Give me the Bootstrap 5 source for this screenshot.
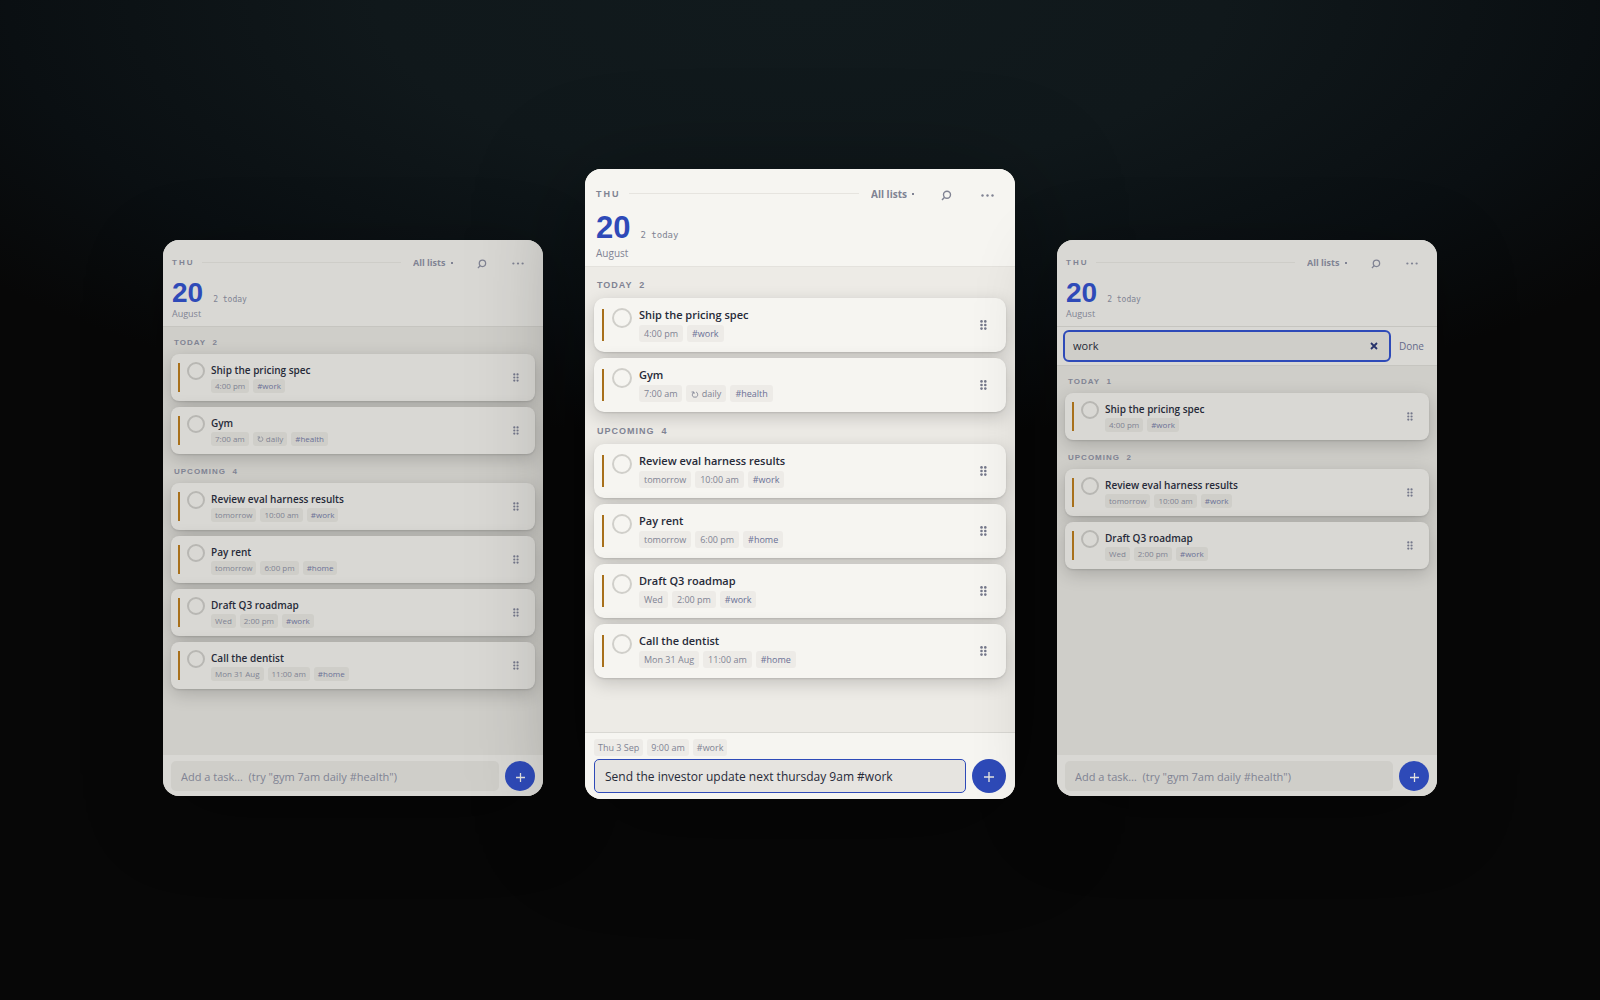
<!DOCTYPE html>
<html lang="en">
<head>
<meta charset="utf-8">
<meta name="viewport" content="width=device-width, initial-scale=1">
<title>Tasks</title>
<link href="https://cdn.jsdelivr.net/npm/bootstrap@5.3.0/dist/css/bootstrap.min.css" rel="stylesheet">
<style>
  body {
    min-height: 100vh;
    font-family: "Open Sans", "Noto Sans", sans-serif;
    background: radial-gradient(ellipse 66% 440px at 50% 0, #111a1d 0%, #10181b 40%, #0a0f12 75%, #070707 100%) no-repeat #070707;
  }
  .stage { padding: 169px 16px 80px; gap: 42px; }

  /* One task window; the sizes of the two smaller windows are the defaults */
  .panel {
    --paper: #d9d8d4; --desk: #cfcec9; --chip: #cfcec9; --rule: #c6c5c0; --ring: #b8b7b3;
    --ink: #262a38; --soft: #808393; --blue: #2e4ab8;
    --fs-title: 10px; --fs-chip: 8px; --fs-label: 8px; --fs-day: 28px; --fs-entry: 11px; --fs-menu: 9px;
    --pad: 8px; --chip-h: 14px; --check: 18px; --bar-h: 29px; --btn: 30px;
    flex: 0 1 380px; min-width: 0; min-height: 556px; margin-bottom: 3px;
    border-radius: 16px; overflow: hidden;
    background: var(--desk); color: var(--ink);
    box-shadow: 0 20px 80px rgba(0,0,0,.3);
  }
  .panel-main {
    --paper: #f6f5f1; --desk: #edebe6; --chip: #edebe7; --rule: #d9d8d3; --ring: #d0cfca;
    --fs-title: 11px; --fs-chip: 9px; --fs-label: 9px; --fs-day: 31px; --fs-entry: 12px; --fs-menu: 10px;
    --pad: 9px; --chip-h: 17px; --check: 20px; --bar-h: 32px; --btn: 34px;
    flex-basis: 430px; min-height: 630px; margin-bottom: 0;
    box-shadow: 0 20px 110px rgba(0,0,0,.4);
  }

  .panel-head { background: var(--paper); border-bottom: 1px solid var(--rule); height: 87px; padding: 12px 9px 0; }
  .panel-main .panel-head { height: 98px; padding: 14px 11px 0; border-color: #e4e2dd; }
  .head-row { height: 21px; }
  .weekday { font: bold var(--fs-label)/12px "Liberation Sans", sans-serif; letter-spacing: 2px; color: var(--soft); }
  .head-rule { height: 1px; background: #cecdc8; margin: 0 12px 0 8px; }
  .panel-main .head-rule { background: #e6e4df; }
  .list-pick { appearance: none; border: 0; padding: 0; background: none; font-weight: 700; font-size: var(--fs-menu); line-height: 14px; color: var(--soft); }
  .pick-dot { width: 2px; height: 2px; background: var(--soft); margin-left: 5px; }
  .icon-btn { border: 0; padding: 0; background: none; color: var(--soft); line-height: 0; width: 36px; height: 20px; }
  .head-tools { margin: 2px -2px 0 11px; }
  .panel-main .icon-btn { width: 41px; }
  .panel-main .head-tools { margin: 3px -4px 0 12px; }
  .day-row { height: 34px; gap: 10px; padding-top: 6px; }
  .panel-main .day-row { height: 42px; padding-top: 8px; }
  .day { font: bold var(--fs-day)/1 "Liberation Sans", sans-serif; color: var(--blue); }
  .count { font: var(--fs-label)/1 "DejaVu Sans Mono", monospace; color: var(--soft); }
  .month { font-size: var(--fs-menu); line-height: 14px; color: var(--soft); }

  .find-row { background: var(--paper); border-bottom: 1px solid var(--rule); padding: 3px 13px 3px 6px; gap: 8px; }
  .find-box { border: 2px solid var(--blue); border-radius: 6px; background: var(--desk); height: 32px; padding: 0 11px 0 8px; }
  .find-box input { border: 0; background: none; outline: 0; padding: 0; min-width: 0; font-size: var(--fs-entry); color: var(--ink); }
  .done-btn { border: 0; padding: 0; background: none; font-size: 10px; color: #666b8a; }

  .panel-body { padding: 9px var(--pad) 24px; }
  .group-label { font: bold var(--fs-label)/14px "Liberation Sans", sans-serif; letter-spacing: 1px; white-space: pre; color: var(--soft); margin: 0 0 4px 3px; }
  .task + .group-label { margin-top: 11px; }
  .panel-main .group-label { line-height: 16px; margin: 0 0 5px 3px; }
  .panel-main .panel-body { padding-top: 10px; }
  .panel-main .task + .group-label { margin-top: 11px; }
  .task { height: 47px; padding: 0 16px 1px 7px; background: var(--paper); border-radius: 8px; box-shadow: 0 1px 2px rgba(0,0,0,.12), 0 5px 18px rgba(0,0,0,.18); }
  .task + .task { margin-top: 6px; }
  .panel-main .task { height: 54px; padding: 0 19px 1px 8px; border-radius: 10px; }
  .task-bar { width: 2px; height: var(--bar-h); background: #a8701b; }
  .task-check { appearance: none; width: var(--check); height: var(--check); border: 2px solid var(--ring); border-radius: 50%; margin: 8px 6px 0 7px; align-self: flex-start; flex: none; }
  .panel-main .task-check { margin: 10px 7px 0 8px; }
  .task-title { font-size: var(--fs-title); line-height: 16px; font-weight: 600; margin-bottom: 1px; }
  .panel-main .task-title { margin-bottom: 2px; }
  .tags { gap: 4px; }
  .tag { height: var(--chip-h); line-height: var(--chip-h); padding: 0 4px; border-radius: 3px; background: var(--chip); font-size: var(--fs-chip); color: var(--soft); white-space: nowrap; }
  .panel-main .tag { padding: 0 5px; }
  .panel-main .panel-foot .tag { padding: 0 4px; }
  .tag-key { color: #6a7096; }
  .grip { color: #74778a; line-height: 0; }

  .panel-foot { background: var(--paper); border-top: 1px solid var(--rule); padding: 5px var(--pad); }
  .panel:not(.panel-main) .panel-foot { border-top-color: var(--paper); }
  .panel-main .panel-foot { padding: 6px 9px; }
  .panel-main .panel-foot > .tags { margin-bottom: 3px; }
  .entry-row { gap: 6px; }
  .entry { height: var(--btn); border: 1px solid transparent; border-radius: 5px; background: var(--desk); font-size: var(--fs-entry); padding: 0 9px; color: var(--ink); min-width: 0; outline: 0; }
  .entry::placeholder { color: var(--soft); opacity: 1; }
  .panel-main .entry { background: #e6e4e0; border-color: var(--blue); padding: 0 10px; }
  .add-btn { width: var(--btn); height: var(--btn); border: 0; border-radius: 50%; background: var(--blue); color: #e4e3df; padding: 2px 0 0; line-height: 0; flex: none; }
</style>
</head>
<body>
<svg width="0" height="0" class="position-absolute" aria-hidden="true">
  <symbol id="find" viewBox="0 0 11 11"><circle cx="6" cy="4.8" r="3.5" fill="none" stroke="currentColor" stroke-width="1.4"/><path d="M3.6 7.2L1 10" stroke="currentColor" stroke-width="1.4"/></symbol>
  <symbol id="dots" viewBox="0 0 13 3"><g fill="currentColor"><circle cx="1.5" cy="1.5" r="1.2"/><circle cx="6.5" cy="1.5" r="1.2"/><circle cx="11.5" cy="1.5" r="1.2"/></g></symbol>
  <symbol id="grip" viewBox="0 0 7 10"><g fill="currentColor"><circle cx="1.5" cy="1.4" r="1.3"/><circle cx="5.3" cy="1.4" r="1.3"/><circle cx="1.5" cy="5" r="1.3"/><circle cx="5.3" cy="5" r="1.3"/><circle cx="1.5" cy="8.6" r="1.3"/><circle cx="5.3" cy="8.6" r="1.3"/></g></symbol>
  <symbol id="plus" viewBox="0 0 10 10"><path d="M5 0v10M0 5h10" stroke="currentColor" stroke-width="1.4"/></symbol>
  <symbol id="loop" viewBox="0 0 8 7"><path d="M.6 1h2.4v2M2.8 1.2C.8 2.4 .8 6 3.2 6.1h1.6C7.4 6 7.2 1.6 5 1" fill="none" stroke="currentColor" stroke-width=".9"/></symbol>
</svg>

<main class="stage d-flex justify-content-center align-items-end">

  <section class="panel d-flex flex-column">
    <header class="panel-head">
      <div class="head-row d-flex align-items-center">
        <span class="weekday">THU</span><span class="head-rule flex-grow-1"></span>
        <select class="list-pick" aria-label="List"><option>All lists</option></select><span class="pick-dot"></span>
        <div class="head-tools d-flex">
          <button class="icon-btn" aria-label="Search"><svg width="10" height="10"><use href="#find"/></svg></button>
          <button class="icon-btn" aria-label="More"><svg width="12" height="3"><use href="#dots"/></svg></button>
        </div>
      </div>
      <div class="day-row d-flex align-items-baseline"><span class="day">20</span><span class="count">2 today</span></div>
      <div class="month">August</div>
    </header>
    <div class="panel-body flex-grow-1">
      <h2 class="group-label">TODAY  2</h2>
      <article class="task d-flex align-items-center">
        <span class="task-bar"></span><input class="task-check" type="checkbox" aria-label="Ship the pricing spec">
        <div class="flex-grow-1"><div class="task-title">Ship the pricing spec</div><div class="tags d-flex"><span class="tag">4:00 pm</span><span class="tag tag-key">#work</span></div></div>
        <span class="grip"><svg width="6" height="9"><use href="#grip"/></svg></span>
      </article>
      <article class="task d-flex align-items-center">
        <span class="task-bar"></span><input class="task-check" type="checkbox" aria-label="Gym">
        <div class="flex-grow-1"><div class="task-title">Gym</div><div class="tags d-flex"><span class="tag">7:00 am</span><span class="tag"><svg width="7" height="6"><use href="#loop"/></svg> daily</span><span class="tag tag-key">#health</span></div></div>
        <span class="grip"><svg width="6" height="9"><use href="#grip"/></svg></span>
      </article>
      <h2 class="group-label">UPCOMING  4</h2>
      <article class="task d-flex align-items-center">
        <span class="task-bar"></span><input class="task-check" type="checkbox" aria-label="Review eval harness results">
        <div class="flex-grow-1"><div class="task-title">Review eval harness results</div><div class="tags d-flex"><span class="tag">tomorrow</span><span class="tag">10:00 am</span><span class="tag tag-key">#work</span></div></div>
        <span class="grip"><svg width="6" height="9"><use href="#grip"/></svg></span>
      </article>
      <article class="task d-flex align-items-center">
        <span class="task-bar"></span><input class="task-check" type="checkbox" aria-label="Pay rent">
        <div class="flex-grow-1"><div class="task-title">Pay rent</div><div class="tags d-flex"><span class="tag">tomorrow</span><span class="tag">6:00 pm</span><span class="tag tag-key">#home</span></div></div>
        <span class="grip"><svg width="6" height="9"><use href="#grip"/></svg></span>
      </article>
      <article class="task d-flex align-items-center">
        <span class="task-bar"></span><input class="task-check" type="checkbox" aria-label="Draft Q3 roadmap">
        <div class="flex-grow-1"><div class="task-title">Draft Q3 roadmap</div><div class="tags d-flex"><span class="tag">Wed</span><span class="tag">2:00 pm</span><span class="tag tag-key">#work</span></div></div>
        <span class="grip"><svg width="6" height="9"><use href="#grip"/></svg></span>
      </article>
      <article class="task d-flex align-items-center">
        <span class="task-bar"></span><input class="task-check" type="checkbox" aria-label="Call the dentist">
        <div class="flex-grow-1"><div class="task-title">Call the dentist</div><div class="tags d-flex"><span class="tag">Mon 31 Aug</span><span class="tag">11:00 am</span><span class="tag tag-key">#home</span></div></div>
        <span class="grip"><svg width="6" height="9"><use href="#grip"/></svg></span>
      </article>
    </div>
    <footer class="panel-foot entry-row d-flex">
      <input class="entry flex-grow-1" type="text" aria-label="Add a task" placeholder="Add a task…&nbsp; (try &quot;gym 7am daily #health&quot;)">
      <button class="add-btn" aria-label="Add"><svg width="9" height="9"><use href="#plus"/></svg></button>
    </footer>
  </section>

  <section class="panel panel-main d-flex flex-column">
    <header class="panel-head">
      <div class="head-row d-flex align-items-center">
        <span class="weekday">THU</span><span class="head-rule flex-grow-1"></span>
        <select class="list-pick" aria-label="List"><option>All lists</option></select><span class="pick-dot"></span>
        <div class="head-tools d-flex">
          <button class="icon-btn" aria-label="Search"><svg width="11" height="11"><use href="#find"/></svg></button>
          <button class="icon-btn" aria-label="More"><svg width="13" height="3"><use href="#dots"/></svg></button>
        </div>
      </div>
      <div class="day-row d-flex align-items-baseline"><span class="day">20</span><span class="count">2 today</span></div>
      <div class="month">August</div>
    </header>
    <div class="panel-body flex-grow-1">
      <h2 class="group-label">TODAY  2</h2>
      <article class="task d-flex align-items-center">
        <span class="task-bar"></span><input class="task-check" type="checkbox" aria-label="Ship the pricing spec">
        <div class="flex-grow-1"><div class="task-title">Ship the pricing spec</div><div class="tags d-flex"><span class="tag">4:00 pm</span><span class="tag tag-key">#work</span></div></div>
        <span class="grip"><svg width="7" height="10"><use href="#grip"/></svg></span>
      </article>
      <article class="task d-flex align-items-center">
        <span class="task-bar"></span><input class="task-check" type="checkbox" aria-label="Gym">
        <div class="flex-grow-1"><div class="task-title">Gym</div><div class="tags d-flex"><span class="tag">7:00 am</span><span class="tag"><svg width="8" height="7"><use href="#loop"/></svg> daily</span><span class="tag tag-key">#health</span></div></div>
        <span class="grip"><svg width="7" height="10"><use href="#grip"/></svg></span>
      </article>
      <h2 class="group-label">UPCOMING  4</h2>
      <article class="task d-flex align-items-center">
        <span class="task-bar"></span><input class="task-check" type="checkbox" aria-label="Review eval harness results">
        <div class="flex-grow-1"><div class="task-title">Review eval harness results</div><div class="tags d-flex"><span class="tag">tomorrow</span><span class="tag">10:00 am</span><span class="tag tag-key">#work</span></div></div>
        <span class="grip"><svg width="7" height="10"><use href="#grip"/></svg></span>
      </article>
      <article class="task d-flex align-items-center">
        <span class="task-bar"></span><input class="task-check" type="checkbox" aria-label="Pay rent">
        <div class="flex-grow-1"><div class="task-title">Pay rent</div><div class="tags d-flex"><span class="tag">tomorrow</span><span class="tag">6:00 pm</span><span class="tag tag-key">#home</span></div></div>
        <span class="grip"><svg width="7" height="10"><use href="#grip"/></svg></span>
      </article>
      <article class="task d-flex align-items-center">
        <span class="task-bar"></span><input class="task-check" type="checkbox" aria-label="Draft Q3 roadmap">
        <div class="flex-grow-1"><div class="task-title">Draft Q3 roadmap</div><div class="tags d-flex"><span class="tag">Wed</span><span class="tag">2:00 pm</span><span class="tag tag-key">#work</span></div></div>
        <span class="grip"><svg width="7" height="10"><use href="#grip"/></svg></span>
      </article>
      <article class="task d-flex align-items-center">
        <span class="task-bar"></span><input class="task-check" type="checkbox" aria-label="Call the dentist">
        <div class="flex-grow-1"><div class="task-title">Call the dentist</div><div class="tags d-flex"><span class="tag">Mon 31 Aug</span><span class="tag">11:00 am</span><span class="tag tag-key">#home</span></div></div>
        <span class="grip"><svg width="7" height="10"><use href="#grip"/></svg></span>
      </article>
    </div>
    <footer class="panel-foot">
      <div class="tags d-flex"><span class="tag">Thu 3 Sep</span><span class="tag">9:00 am</span><span class="tag">#work</span></div>
      <div class="entry-row d-flex">
        <input class="entry flex-grow-1" type="text" aria-label="Add a task" value="Send the investor update next thursday 9am #work">
        <button class="add-btn" aria-label="Add"><svg width="10" height="10"><use href="#plus"/></svg></button>
      </div>
    </footer>
  </section>

  <section class="panel d-flex flex-column">
    <header class="panel-head">
      <div class="head-row d-flex align-items-center">
        <span class="weekday">THU</span><span class="head-rule flex-grow-1"></span>
        <select class="list-pick" aria-label="List"><option>All lists</option></select><span class="pick-dot"></span>
        <div class="head-tools d-flex">
          <button class="icon-btn" aria-label="Search"><svg width="10" height="10"><use href="#find"/></svg></button>
          <button class="icon-btn" aria-label="More"><svg width="12" height="3"><use href="#dots"/></svg></button>
        </div>
      </div>
      <div class="day-row d-flex align-items-baseline"><span class="day">20</span><span class="count">2 today</span></div>
      <div class="month">August</div>
    </header>
    <div class="find-row d-flex align-items-center">
      <div class="find-box d-flex align-items-center flex-grow-1">
        <input class="flex-grow-1" type="text" aria-label="Search tasks" value="work">
        <button class="icon-btn w-auto" aria-label="Clear"><svg width="8" height="8" viewBox="0 0 8 8"><path d="M1 1l6 6M7 1L1 7" stroke="#27336b" stroke-width="1.8"/></svg></button>
      </div>
      <button class="done-btn">Done</button>
    </div>
    <div class="panel-body flex-grow-1">
      <h2 class="group-label">TODAY  1</h2>
      <article class="task d-flex align-items-center">
        <span class="task-bar"></span><input class="task-check" type="checkbox" aria-label="Ship the pricing spec">
        <div class="flex-grow-1"><div class="task-title">Ship the pricing spec</div><div class="tags d-flex"><span class="tag">4:00 pm</span><span class="tag tag-key">#work</span></div></div>
        <span class="grip"><svg width="6" height="9"><use href="#grip"/></svg></span>
      </article>
      <h2 class="group-label">UPCOMING  2</h2>
      <article class="task d-flex align-items-center">
        <span class="task-bar"></span><input class="task-check" type="checkbox" aria-label="Review eval harness results">
        <div class="flex-grow-1"><div class="task-title">Review eval harness results</div><div class="tags d-flex"><span class="tag">tomorrow</span><span class="tag">10:00 am</span><span class="tag tag-key">#work</span></div></div>
        <span class="grip"><svg width="6" height="9"><use href="#grip"/></svg></span>
      </article>
      <article class="task d-flex align-items-center">
        <span class="task-bar"></span><input class="task-check" type="checkbox" aria-label="Draft Q3 roadmap">
        <div class="flex-grow-1"><div class="task-title">Draft Q3 roadmap</div><div class="tags d-flex"><span class="tag">Wed</span><span class="tag">2:00 pm</span><span class="tag tag-key">#work</span></div></div>
        <span class="grip"><svg width="6" height="9"><use href="#grip"/></svg></span>
      </article>
    </div>
    <footer class="panel-foot entry-row d-flex">
      <input class="entry flex-grow-1" type="text" aria-label="Add a task" placeholder="Add a task…&nbsp; (try &quot;gym 7am daily #health&quot;)">
      <button class="add-btn" aria-label="Add"><svg width="9" height="9"><use href="#plus"/></svg></button>
    </footer>
  </section>

</main>
<script src="https://cdn.jsdelivr.net/npm/bootstrap@5.3.0/dist/js/bootstrap.bundle.min.js"></script>
</body>
</html>
